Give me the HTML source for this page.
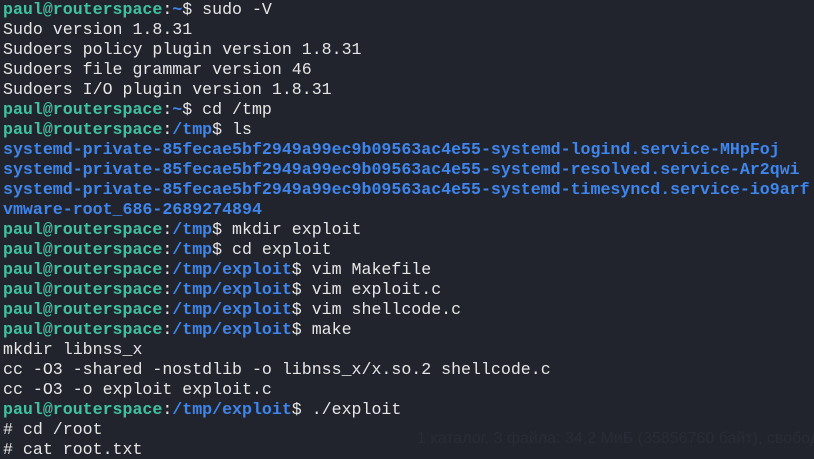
<!DOCTYPE html>
<html><head><meta charset="utf-8"><style>
html,body{margin:0;padding:0;width:814px;height:459px;overflow:hidden;background:#22242d;}
pre{margin:0;padding:0 0 0 3px;font-family:"Liberation Mono",monospace;font-size:16.6px;line-height:20px;color:#e6e6e6;white-space:pre;position:relative;}
.g{color:#3fc29f;font-weight:bold}
.b{color:#3e85ec;font-weight:bold}
.bg{position:absolute;color:#292c36;font-family:"Liberation Sans",sans-serif;font-size:16px;white-space:nowrap}
</style></head><body>
<div class="bg" style="left:417px;top:430px;">1 каталог, 3 файла: 34,2 МиБ (35856760 байт), свободного</div>
<pre><span class="g">paul@routerspace</span>:<span class="b">~</span>$ sudo -V
Sudo version 1.8.31
Sudoers policy plugin version 1.8.31
Sudoers file grammar version 46
Sudoers I/O plugin version 1.8.31
<span class="g">paul@routerspace</span>:<span class="b">~</span>$ cd /tmp
<span class="g">paul@routerspace</span>:<span class="b">/tmp</span>$ ls
<span class="b">systemd-private-85fecae5bf2949a99ec9b09563ac4e55-systemd-logind.service-MHpFoj</span>
<span class="b">systemd-private-85fecae5bf2949a99ec9b09563ac4e55-systemd-resolved.service-Ar2qwi</span>
<span class="b">systemd-private-85fecae5bf2949a99ec9b09563ac4e55-systemd-timesyncd.service-io9arf</span>
<span class="b">vmware-root_686-2689274894</span>
<span class="g">paul@routerspace</span>:<span class="b">/tmp</span>$ mkdir exploit
<span class="g">paul@routerspace</span>:<span class="b">/tmp</span>$ cd exploit
<span class="g">paul@routerspace</span>:<span class="b">/tmp/exploit</span>$ vim Makefile
<span class="g">paul@routerspace</span>:<span class="b">/tmp/exploit</span>$ vim exploit.c
<span class="g">paul@routerspace</span>:<span class="b">/tmp/exploit</span>$ vim shellcode.c
<span class="g">paul@routerspace</span>:<span class="b">/tmp/exploit</span>$ make
mkdir libnss_x
cc -O3 -shared -nostdlib -o libnss_x/x.so.2 shellcode.c
cc -O3 -o exploit exploit.c
<span class="g">paul@routerspace</span>:<span class="b">/tmp/exploit</span>$ ./exploit
# cd /root
# cat root.txt
</pre>
</body></html>
